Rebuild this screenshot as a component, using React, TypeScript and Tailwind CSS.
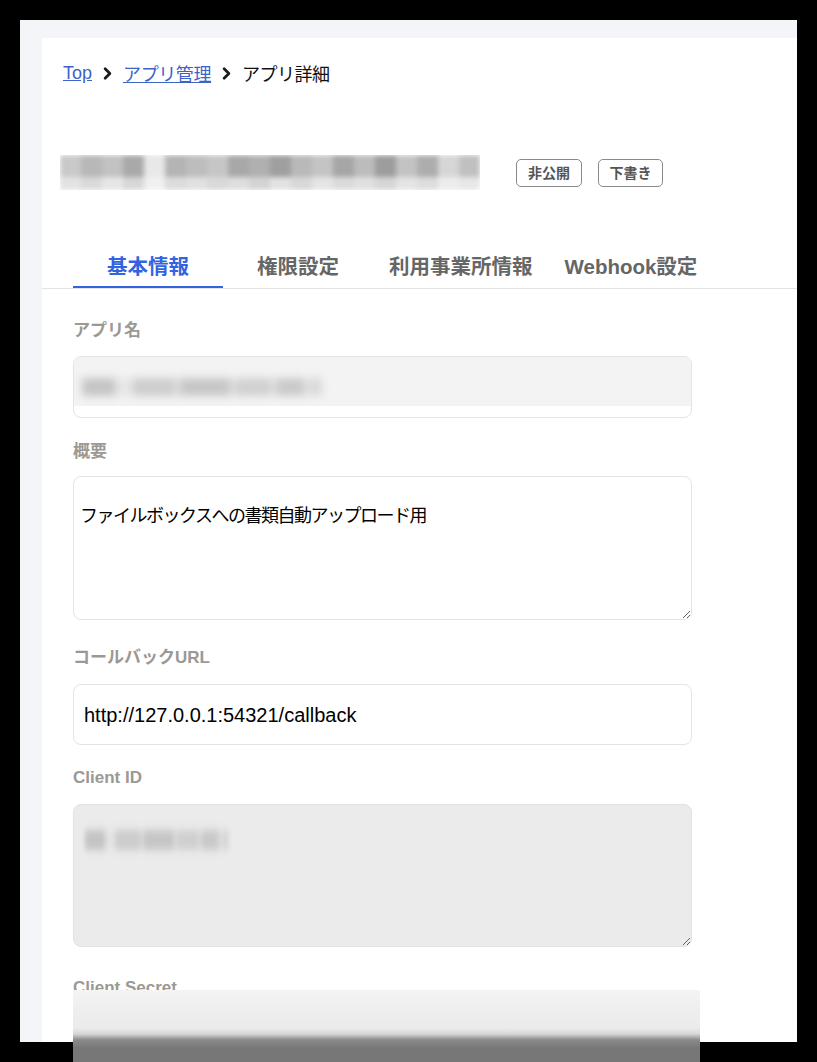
import { ChevronRight } from "lucide-react";

const titleTop = [
  "bg-[#c9c9c9]", "bg-[#b8b8b8]", "bg-[#c2c2c2]", "bg-[#a9a9a9]", "bg-[#e8e8e8]",
  "bg-[#b4b4b4]", "bg-[#bdbdbd]", "bg-[#c6c6c6]", "bg-[#a8a8a8]", "bg-[#b0b0b0]",
  "bg-[#9f9f9f]", "bg-[#b9b9b9]", "bg-[#c4c4c4]", "bg-[#a6a6a6]", "bg-[#bcbcbc]",
  "bg-[#9d9d9d]", "bg-[#c3c3c3]", "bg-[#adadad]", "bg-[#d6d6d6]", "bg-[#c0c0c0]",
];
const titleBottom = [
  "bg-[#e3e3e3]", "bg-[#dadada]", "bg-[#e6e6e6]", "bg-[#d7d7d7]", "bg-[#f0f0f0]",
  "bg-[#dcdcdc]", "bg-[#e1e1e1]", "bg-[#d9d9d9]", "bg-[#dedede]", "bg-[#d4d4d4]",
  "bg-[#e2e2e2]", "bg-[#d8d8d8]", "bg-[#e5e5e5]", "bg-[#dbdbdb]", "bg-[#e0e0e0]",
  "bg-[#d6d6d6]", "bg-[#e4e4e4]", "bg-[#dddddd]", "bg-[#ececec]", "bg-[#e7e7e7]",
];

const tabs = ["基本情報", "権限設定", "利用事業所情報", "Webhook設定"];

function Label({ children, className = "" }: { children: string; className?: string }) {
  return (
    <div className={"h-6 leading-6 text-[17px] font-bold text-[#9c9893] " + className}>
      {children}
    </div>
  );
}

function Blurred({ className }: { className: string }) {
  return (
    <div className={"flex gap-[3px] blur-[4px] opacity-80 " + className}>
      <div className="w-[34px] bg-[#b9b9b9]" />
      <div className="w-[10px] bg-[#e0e0e0]" />
      <div className="w-[44px] bg-[#c4c4c4]" />
      <div className="w-[52px] bg-[#bcbcbc]" />
      <div className="w-[38px] bg-[#c8c8c8]" />
      <div className="w-[30px] bg-[#c0c0c0]" />
      <div className="w-[14px] bg-[#d2d2d2]" />
    </div>
  );
}

export default function App() {
  return (
    <div className="relative w-[817px] h-[1062px] bg-black p-[20px] overflow-hidden font-['Liberation_Sans','Noto_Sans_CJK_JP',sans-serif]">
      <div className="h-full bg-[#f4f5f9] pl-[22px] pt-[18px]">
        <div className="h-full bg-white">
          {/* breadcrumb */}
          <nav className="pl-[21px] pt-[23px] flex items-center h-[47px] text-[18px] font-['Noto_Sans_CJK_JP',sans-serif]">
            <a className="text-[#3b63c9] underline font-['Liberation_Sans','Noto_Sans_CJK_JP',sans-serif] text-[18px]">Top</a>
            <ChevronRight size={19} strokeWidth={3.5} className="mx-[6px] text-[#1a1a1a]" />
            <a className="text-[#3b63c9] underline tracking-[-0.4px]">アプリ管理</a>
            <ChevronRight size={19} strokeWidth={3.5} className="mx-[6px] text-[#1a1a1a]" />
            <span className="text-[#111] tracking-[-0.5px]">アプリ詳細</span>
          </nav>

          {/* title */}
          <div className="mt-[65px] h-[45px] pl-[18px] flex items-center">
            <div className="w-[420px] h-[35px] overflow-hidden">
              <div className="blur-[2.5px]">
                <div className="flex h-[22px]">
                  {titleTop.map((c, i) => (
                    <div key={i} className={"w-[21px] h-full " + c} />
                  ))}
                </div>
                <div className="flex h-[13px]">
                  {titleBottom.map((c, i) => (
                    <div key={i} className={"w-[21px] h-full " + c} />
                  ))}
                </div>
              </div>
            </div>
            <div className="ml-[36px] flex gap-[16px]">
              <span className="h-[28px] w-[66px] flex items-center justify-center border border-[#8a8a8a] rounded-[5px] text-[14px] font-bold text-[#555] font-['Noto_Sans_CJK_JP',sans-serif]">
                非公開
              </span>
              <span className="h-[28px] w-[65px] flex items-center justify-center border border-[#8a8a8a] rounded-[5px] text-[14px] font-bold text-[#555] font-['Noto_Sans_CJK_JP',sans-serif]">
                下書き
              </span>
            </div>
          </div>

          {/* tabs */}
          <div className="mt-[51px] border-b border-[#e3e3e3] pl-[31px] flex">
            {tabs.map((t, i) => (
              <div
                key={t}
                className={
                  "min-w-[150px] px-4 h-[42px] pt-[2px] flex items-center justify-center text-[20.5px] font-bold border-b-[2px] " +
                  (i === 0 ? "text-[#3463e0] border-[#3463e0]" : "text-[#666] border-transparent")
                }
              >
                {t}
              </div>
            ))}
          </div>

          {/* form */}
          <div className="pl-[31px] w-[650px]">
            <Label className="mt-[30px]">アプリ名</Label>
            <div className="mt-[13px] h-[62px] rounded-[8px] border border-[#e4e4e4] overflow-hidden">
              <div className="h-[49px] bg-[#f3f3f3] pt-[21px] pl-[8px]">
                <Blurred className="h-[18px]" />
              </div>
            </div>

            <Label className="mt-[22px]">概要</Label>
            <textarea
              readOnly
              defaultValue="ファイルボックスへの書類自動アップロード用"
              className="mt-[12px] block w-[619px] h-[144px] rounded-[8px] border border-[#e4e4e4] pt-[22px] pl-[6px] text-[18px] tracking-[-1.5px] leading-[30px] text-black outline-none font-['Noto_Sans_CJK_JP',sans-serif]"
            />

            <Label className="mt-[26px]">コールバックURL</Label>
            <div className="mt-[14px] h-[61px] w-[619px] rounded-[8px] border border-[#e4e4e4] flex items-center pl-[10px] text-[20px] text-black">
              http://127.0.0.1:54321/callback
            </div>

            <Label className="mt-[21px]">Client ID</Label>
            <div className="mt-[14px] relative w-[619px] h-[143px]">
              <textarea
                readOnly
                disabled
                className="block w-full h-full rounded-[8px] border border-[#e2e2e2] bg-[#ebebeb] outline-none"
              />
              <div className="absolute left-[12px] top-[26px] pointer-events-none">
                <Blurred className="h-[20px] scale-x-[0.6] origin-left" />
              </div>
            </div>

            <Label className="mt-[29px]">Client Secret</Label>
          </div>
        </div>
      </div>

      {/* blurred overlay covering the bottom */}
      <div className="absolute left-[73px] top-[990px] w-[627px] h-[72px] bg-[linear-gradient(to_bottom,#f4f4f4_0px,#efefef_16px,#ebebeb_38px,#d6d6d6_44px,#8a8a8a_50px,#777777_58px,#777777_72px)]" />
    </div>
  );
}
